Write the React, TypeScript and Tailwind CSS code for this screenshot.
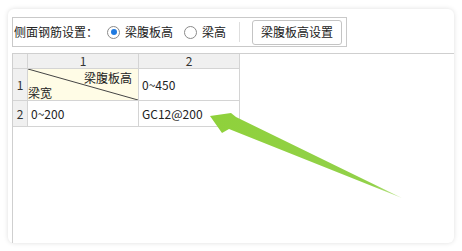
import React from "react";

const font = "font-['Microsoft_YaHei','Noto_Sans_CJK_SC',sans-serif]";

function Radio({ checked }: { checked: boolean }) {
  return (
    <span className="relative flex h-[13px] w-[13px] items-center justify-center rounded-full border border-[#8a8a8a] bg-white">
      {checked && <span className="h-[6px] w-[6px] rounded-full bg-[#1f7ae0]" />}
    </span>
  );
}

export default function App() {
  return (
    <div className={`relative h-[251px] w-[462px] bg-white ${font} text-[12px] text-[#222]`}>
      <div className="absolute left-[8px] top-[9px] flex h-[234px] w-[446px] flex-col rounded-[6px] bg-white pl-[4px] pt-[8px] shadow-[0_0_5px_rgba(0,0,0,0.13)]">
        {/* toolbar */}
        <div className="flex h-[30px] w-[335px] items-center border border-[#c9c9c9] pl-[1px] pr-[1px]">
          <span className="leading-none">侧面钢筋设置：</span>
          <span className="ml-[9px] flex items-center">
            <Radio checked />
            <span className="ml-[5px] leading-none">梁腹板高</span>
          </span>
          <span className="ml-[11px] flex items-center">
            <Radio checked={false} />
            <span className="ml-[5px] leading-none">梁高</span>
          </span>
          <span className="ml-[13px] h-[20px] w-px bg-[#dedede]" />
          <span className="ml-[12px] flex h-[25px] w-[90px] items-center justify-center rounded-[3px] border border-[#c4c4c4] bg-white leading-none">
            梁腹板高设置
          </span>
        </div>
        {/* grid */}
        <div className="mt-[6px] flex-1 border-l border-t border-[#cfcfcf]">
          <div className="grid grid-cols-[15px_111px_101px] grid-rows-[15px_32px_26px]">
            <div className="border-b border-r border-[#d4d4d4] bg-[#f0f0f0]" />
            <div className="flex items-center justify-center border-b border-r border-[#d4d4d4] bg-[#f0f0f0] leading-none text-[#333]">1</div>
            <div className="flex items-center justify-center border-b border-r border-[#d4d4d4] bg-[#f0f0f0] leading-none text-[#333]">2</div>

            <div className="flex items-center justify-center border-b border-r border-[#d4d4d4] bg-[#f0f0f0] text-[#333]">1</div>
            <div className="relative border-b border-r border-[#d4d4d4] bg-[#fffce6]">
              <svg className="absolute inset-0" width="110" height="31" viewBox="0 0 110 31">
                <line x1="0" y1="0" x2="110" y2="31" stroke="#444" strokeWidth="1" />
              </svg>
              <span className="absolute right-[6px] top-[3px] leading-none">梁腹板高</span>
              <span className="absolute bottom-[1px] left-[0px] leading-none">梁宽</span>
            </div>
            <div className="flex items-center border-b border-r border-[#d4d4d4] pl-[3px]">0~450</div>

            <div className="flex items-center justify-center border-b border-r border-[#d4d4d4] bg-[#f0f0f0] text-[#333]">2</div>
            <div className="flex items-center border-b border-r border-[#d4d4d4] pl-[3px]">0~200</div>
            <div className="flex items-center border-b border-r border-[#d4d4d4] pl-[3px]">GC12@200</div>
          </div>
        </div>
      </div>
      {/* annotation arrow */}
      <svg className="pointer-events-none absolute left-0 top-0" width="462" height="251" viewBox="0 0 462 251">
        <defs>
          <linearGradient id="ag" x1="210" y1="116" x2="402" y2="198" gradientUnits="userSpaceOnUse">
            <stop offset="0" stopColor="#8fd13b" />
            <stop offset="0.85" stopColor="#92d14a" />
            <stop offset="1" stopColor="#c8eaa0" />
          </linearGradient>
        </defs>
        <polygon points="210,116 231,113 236,117 402,198 229,129 222,133" fill="url(#ag)" />
      </svg>
    </div>
  );
}
